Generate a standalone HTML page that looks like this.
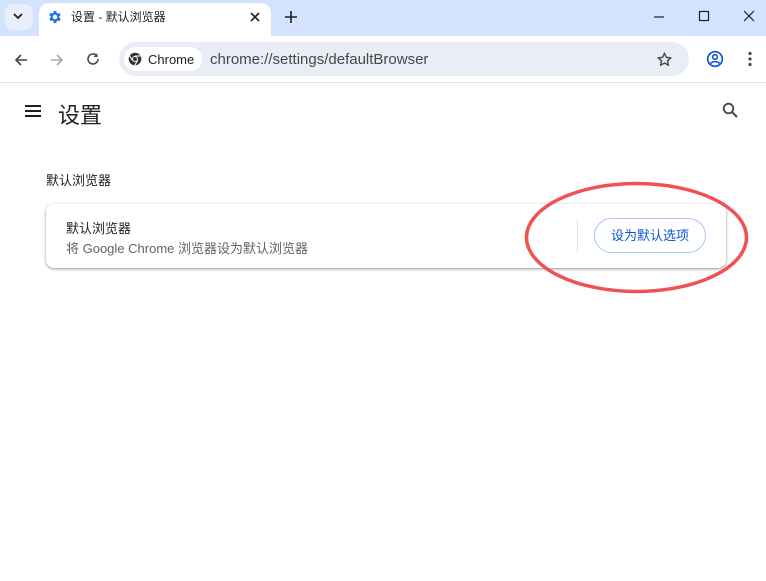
<!DOCTYPE html>
<html><head><meta charset="utf-8"><style>
*{margin:0;padding:0;box-sizing:border-box}
body{width:766px;height:581px;position:relative;background:#fff;font-family:"Liberation Sans","Noto Sans CJK SC",sans-serif;overflow:hidden}
.abs{position:absolute}
</style></head><body>
<div class="abs" style="left:0;top:0;width:766px;height:36px;background:#d3e3fd"></div>
<div class="abs" style="left:5px;top:4px;width:28px;height:26px;border-radius:8px;background:#e9effa"></div>
<svg class="abs" style="left:12px;top:11px" width="12" height="10"><path d="M2 3l4 4 4-4" stroke="#1f1f1f" stroke-width="1.8" fill="none"/></svg>
<div class="abs" style="left:39px;top:3px;width:232px;height:33px;background:#fff;border-radius:10px 10px 0 0"></div>
<svg class="abs" style="left:47px;top:9px" width="16" height="16" viewBox="0 0 24 24"><path fill="#1a73e8" d="M19.4 13a7.5 7.5 0 000-2l2.1-1.6-2-3.5-2.5 1a7.6 7.6 0 00-1.7-1L15 3h-4l-.4 2.7a7.6 7.6 0 00-1.7 1l-2.5-1-2 3.5L6.6 11a7.5 7.5 0 000 2l-2.1 1.6 2 3.5 2.5-1a7.6 7.6 0 001.7 1L11 21h4l.4-2.7a7.6 7.6 0 001.7-1l2.5 1 2-3.5zM13 15.5a3.5 3.5 0 110-7 3.5 3.5 0 010 7z" transform="translate(-1 0)"/></svg>
<div class="abs" style="left:71px;top:8px;font-size:12px;color:#1f1f1f">设置 - 默认浏览器</div>
<svg class="abs" style="left:249px;top:11px" width="12" height="12"><path d="M2 2l8 8M10 2l-8 8" stroke="#1f1f1f" stroke-width="1.6"/></svg>
<svg class="abs" style="left:284px;top:10px" width="14" height="14"><path d="M7 1v12M1 7h12" stroke="#1f1f1f" stroke-width="1.6"/></svg>
<svg class="abs" style="left:652px;top:10px" width="14" height="14"><path d="M2 7h10" stroke="#1f1f1f" stroke-width="1.2"/></svg>
<svg class="abs" style="left:698px;top:10px" width="14" height="14"><rect x="1.5" y="1.5" width="9" height="9" stroke="#1f1f1f" stroke-width="1.2" fill="none"/></svg>
<svg class="abs" style="left:743px;top:10px" width="14" height="14"><path d="M1 1l10 10M11 1L1 11" stroke="#1f1f1f" stroke-width="1.2"/></svg>
<div class="abs" style="left:0;top:82px;width:766px;height:1px;background:#e3e3e3"></div>
<svg class="abs" style="left:13px;top:52px" width="16" height="16"><path d="M14 8H3M8 3L3 8l5 5" stroke="#474747" stroke-width="1.6" fill="none"/></svg>
<svg class="abs" style="left:49px;top:52px" width="16" height="16"><path d="M2 8h11M8 3l5 5-5 5" stroke="#a8a8a8" stroke-width="1.6" fill="none"/></svg>
<svg class="abs" style="left:85px;top:51px" width="16" height="16"><path d="M13 8a5 5 0 11-1.5-3.6" stroke="#474747" stroke-width="1.6" fill="none"/><path d="M12.5 2v4h-4z" fill="#474747"/></svg>
<div class="abs" style="left:119px;top:42px;width:570px;height:34px;border-radius:17px;background:#e9eef6"></div>
<div class="abs" style="left:124px;top:47px;width:78px;height:24px;border-radius:12px;background:#fff"></div>
<svg class="abs" style="left:128px;top:52px" width="14" height="14" viewBox="0 0 14 14"><circle cx="7" cy="7" r="6.3" fill="#333"/><circle cx="7" cy="7" r="3" fill="#fff"/><circle cx="7" cy="7" r="2" fill="#333"/><path d="M7 4h6M4.4 8.5L1.5 3.5M9.6 8.5l-3 5" stroke="#fff" stroke-width="1"/></svg>
<div class="abs" style="left:148px;top:52px;font-size:13px;color:#1f1f1f">Chrome</div>
<div class="abs" style="left:210px;top:51px;font-size:15px;color:#474747">chrome://settings/defaultBrowser</div>
<svg class="abs" style="left:656px;top:51px" width="17" height="17" viewBox="0 0 24 24"><path d="M12 3l2.6 6 6.4.6-4.9 4.3 1.5 6.3L12 16.9l-5.6 3.3 1.5-6.3L3 9.6 9.4 9z" stroke="#474747" stroke-width="2" fill="none" stroke-linejoin="round"/></svg>
<svg class="abs" style="left:706px;top:50px" width="18" height="18" viewBox="0 0 18 18"><circle cx="9" cy="9" r="7.3" stroke="#0b57d0" stroke-width="1.7" fill="none"/><circle cx="9" cy="7" r="2.3" stroke="#0b57d0" stroke-width="1.6" fill="none"/><path d="M4.5 13.5c2.5-2.5 6.5-2.5 9 0" stroke="#0b57d0" stroke-width="1.6" fill="none"/></svg>
<svg class="abs" style="left:747px;top:51px" width="6" height="16"><circle cx="3" cy="2.5" r="1.6" fill="#474747"/><circle cx="3" cy="8" r="1.6" fill="#474747"/><circle cx="3" cy="13.5" r="1.6" fill="#474747"/></svg>
<svg class="abs" style="left:25px;top:104px" width="16" height="14"><path d="M0 2h16M0 7h16M0 12h16" stroke="#1f1f1f" stroke-width="2"/></svg>
<div class="abs" style="left:58px;top:98px;font-size:22px;color:#1f1f1f">设置</div>
<svg class="abs" style="left:722px;top:102px" width="17" height="17"><circle cx="6.5" cy="6.5" r="4.8" stroke="#474747" stroke-width="1.8" fill="none"/><path d="M10 10l5 5" stroke="#474747" stroke-width="2"/></svg>
<div class="abs" style="left:46px;top:170px;font-size:13px;color:#1f1f1f">默认浏览器</div>
<div class="abs" style="left:46px;top:204px;width:680px;height:64px;border-radius:8px;background:#fff;box-shadow:0 1px 3px rgba(0,0,0,.3),0 1px 2px rgba(0,0,0,.15)"></div>
<div class="abs" style="left:66px;top:218px;font-size:13px;color:#1f1f1f">默认浏览器</div>
<div class="abs" style="left:66px;top:238px;font-size:13px;color:#5f6368">将 Google Chrome 浏览器设为默认浏览器</div>
<div class="abs" style="left:577px;top:220px;width:1px;height:32px;background:#e3e3e3"></div>
<div class="abs" style="left:594px;top:218px;width:112px;height:35px;border-radius:18px;border:1px solid #a8c7fa;font-size:13px;color:#0b57d0;text-align:center;line-height:33px">设为默认选项</div>
<svg class="abs" style="left:0;top:0" width="766" height="581"><ellipse cx="636.5" cy="237.5" rx="110" ry="54" stroke="#f05252" stroke-width="3.5" fill="none"/></svg>
</body></html>
